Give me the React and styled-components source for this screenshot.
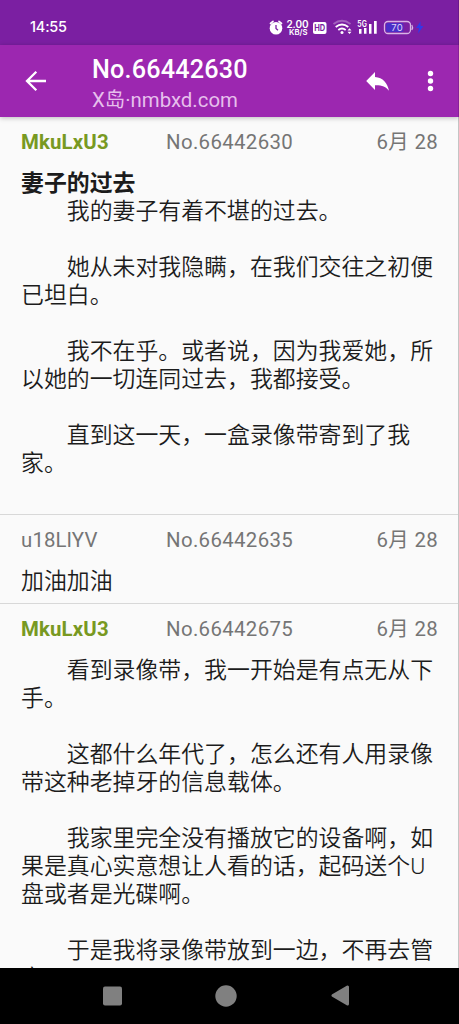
import React from 'react';
import styled, { createGlobalStyle } from 'styled-components';

const GlobalStyle = createGlobalStyle`
  * {
    box-sizing: border-box;
  }
  body {
    margin: 0;
    background: #000;
    font-family: Roboto, "Noto Sans CJK SC", sans-serif;
    text-spacing-trim: space-all;
  }
`;

const Screen = styled.div`
  width: 459px;
  height: 1024px;
  display: flex;
  flex-direction: column;
  overflow: hidden;
`;

const StatusBar = styled.div`
  flex: none;
  height: 45px;
  padding: 8px 30px 0 30px;
  display: flex;
  align-items: center;
  justify-content: space-between;
  color: #fff;
  background: #7b1fa2;
  border-right: 1px solid #6a1a8c;
`;

const Clock = styled.span`
  font-family: Inter, sans-serif;
  font-size: 14.5px;
  font-weight: 500;
  letter-spacing: -0.2px;
`;

const StatusIcons = styled.svg`
  display: block;
  width: 160px;
  height: 22px;
  font-family: Inter, sans-serif;
`;

const AppBar = styled.header`
  flex: none;
  height: 72px;
  padding: 0 20px 0 22px;
  display: flex;
  align-items: center;
  color: #fff;
  background: #9c27b0;
  border-right: 1px solid #87219a;
  position: relative;
  box-shadow: 0 1px 5px rgba(0, 0, 0, 0.25);
`;

const IconButton = styled.button`
  width: 28px;
  height: 28px;
  padding: 0;
  border: none;
  background: none;
  color: inherit;
  margin-left: ${(props) => props.$gap || 0}px;
  svg {
    display: block;
  }
`;

const TitleBlock = styled.div`
  flex: 1;
  margin-left: 42px;
  padding-top: 6px;
`;

const Title = styled.h1`
  margin: 0;
  font-size: 25.2px;
  line-height: 32px;
  font-weight: 500;
  letter-spacing: 0.2px;
`;

const Subtitle = styled.div`
  font-size: 20.4px;
  line-height: 29px;
  color: #e6bfec;
`;

const PostList = styled.main`
  flex: 1;
  min-height: 0;
  overflow: hidden;
  background: #fafafa;
  border-right: 1px solid #c4c4c4;
`;

const Post = styled.article`
  padding: 12px 20px 7.5px 21px;
  border-bottom: 1px solid #d8d8d8;
`;

const Meta = styled.div`
  height: 27px;
  display: grid;
  grid-template-columns: 145px 1fr auto;
  align-items: center;
  font-size: 20.4px;
  line-height: 27px;
  letter-spacing: 0.35px;
  color: #757575;
`;

const User = styled.span`
  letter-spacing: 0.15px;
  font-weight: ${(props) => (props.$op ? 700 : 400)};
  color: ${(props) => (props.$op ? '#789922' : 'inherit')};
`;

const Content = styled.div`
  margin-top: 13px;
  padding-top: 1px;
  font-size: 22.9px;
  line-height: 28px;
  font-weight: 350;
  color: #1c1c1c;
  white-space: pre-wrap;
`;

const Subject = styled.div`
  font-weight: 700;
`;

const NavBar = styled.nav`
  flex: none;
  height: 56px;
  padding-left: 102px;
  display: flex;
  align-items: center;
  gap: 92px;
  background: #000;
`;

const posts = [
  {
    id: '66442630',
    user: 'MkuLxU3',
    op: true,
    subject: '妻子的过去',
    text: `  我的妻子有着不堪的过去。

  她从未对我隐瞒,在我们交往之初便已坦白。

  我不在乎。或者说,因为我爱她,所以她的一切连同过去,我都接受。

  直到这一天,一盒录像带寄到了我家。
\u200b`,
  },
  { id: '66442635', user: 'u18LlYV', text: '加油加油' },
  {
    id: '66442675',
    user: 'MkuLxU3',
    op: true,
    text: `  看到录像带,我一开始是有点无从下手。

  这都什么年代了,怎么还有人用录像带这种老掉牙的信息载体。

  我家里完全没有播放它的设备啊,如果是真心实意想让人看的话,起码送个U盘或者是光碟啊。

  于是我将录像带放到一边,不再去管它。`,
  },
];

// paragraphs are indented by two full-width spaces
const format = (text) => text.replace(/^ {2}/gm, '\u3000\u3000').replace(/,/g, '\uff0c');

function Status() {
  return (
    <StatusBar>
      <Clock>14:55</Clock>
      <StatusIcons viewBox="268 15 160 22" fill="#fff">
        <circle cx="276" cy="27.3" r="6.3" />
        <path d="M270.500 22.500l2.500-2.100M281.500 22.500l-2.500-2.100" stroke="#fff" strokeWidth="1.700" strokeLinecap="round" />
        <path d="M276 24v3.500l2 1.700" fill="none" stroke="#7b1fa2" strokeWidth="1.3" />
        <text x="286.5" y="26.8" fontSize="10" fontWeight="600" textLength="22">2.00</text>
        <text x="289" y="34.3" fontSize="8" fontWeight="600" textLength="18.5" lengthAdjust="spacingAndGlyphs">KB/S</text>
        <rect x="313" y="21" width="13.5" height="12" rx="2" />
        <text x="314.2" y="30.3" fontSize="8.7" fontWeight="700" fill="#7b1fa2" textLength="11" lengthAdjust="spacingAndGlyphs">HD</text>
        <g fill="none" stroke="#fff" strokeWidth="1.8">
          <path d="M333.5 23q8.500-6.500 17 0" opacity="0.3" />
          <path d="M335.700 26q6.300-5 12.600 0" />
          <path d="M338.300 29q3.700-3 7.400 0" />
        </g>
        <circle cx="342" cy="31.500" r="1.500" />
        <path d="M347.500 29.500l2-2.300 2 2.300zM347.500 30.700l2 2.300 2-2.300z" />
        <text x="357.300" y="25.600" fontSize="8.300" fontWeight="600" textLength="9.500" lengthAdjust="spacingAndGlyphs">5G</text>
        <path d="M359 28h2.500v4.700H359zM364 27h2.500v5.700H364zM369 23h2.500v9.700H369zM374 20h2.700v12.700H374z" />
        <rect x="384.500" y="20.500" width="26" height="12" rx="3.500" fill="none" stroke="#d8b4e6" strokeWidth="1.300" />
        <rect x="386" y="22" width="17.500" height="9" rx="2" fill="#4a2fc8" />
        <path d="M411.800 24q1.600 2.500 0 5" fill="none" stroke="#d8b4e6" strokeWidth="1.200" />
        <text x="391.300" y="30" fontSize="9.500" fill="#e4d4f5" textLength="11.500">70</text>
        <path d="M420.500 20.500L416 27h3l-1 5.500 5.500-7.500h-3z" fill="#3338e8" />
      </StatusIcons>
    </StatusBar>
  );
}

function Toolbar() {
  return (
    <AppBar>
      <IconButton aria-label="back">
        <svg width="28" height="28" viewBox="0 0 28 28" fill="none" stroke="#fff" strokeWidth="2.3">
          <path d="M24 14H6M14.300 4.700L5 14l9.300 9.300" />
        </svg>
      </IconButton>
      <TitleBlock>
        <Title>No.66442630</Title>
        <Subtitle>X岛·nmbxd.com</Subtitle>
      </TitleBlock>
      <IconButton aria-label="reply">
        <svg width="28" height="28" viewBox="0 0 28 28" fill="#fff">
          <path d="M12 5v5c8 .5 12.500 6 14 13.800-3-4.300-7.500-5.800-14-5.600V23l-8.800-9z" />
        </svg>
      </IconButton>
      <IconButton aria-label="more" $gap={19}>
        <svg width="28" height="28" viewBox="0 0 28 28" fill="#fff">
          <circle cx="20.500" cy="6.500" r="2.700" />
          <circle cx="20.500" cy="14" r="2.700" />
          <circle cx="20.500" cy="21.500" r="2.700" />
        </svg>
      </IconButton>
    </AppBar>
  );
}

function App() {
  return (
    <>
      <GlobalStyle />
      <Screen>
        <Status />
        <Toolbar />
        <PostList>
          {posts.map((post) => (
            <Post key={post.id}>
              <Meta>
                <User $op={post.op}>{post.user}</User>
                <span>No.{post.id}</span>
                <span>6月 28</span>
              </Meta>
              <Content lang="zh-CN">
                {post.subject && <Subject>{post.subject}</Subject>}
                {format(post.text)}
              </Content>
            </Post>
          ))}
        </PostList>
        <NavBar>
          <svg width="22" height="22" fill="#808080">
            <rect x="1" y="1.500" width="19" height="19" rx="2" />
          </svg>
          <svg width="22" height="22" fill="#808080" overflow="visible">
            <circle cx="10" cy="11" r="10.700" />
          </svg>
          <svg width="22" height="22" fill="#808080" stroke="#808080" strokeWidth="3" strokeLinejoin="round">
            <path d="M17.500 2v17L3 10.500z" />
          </svg>
        </NavBar>
      </Screen>
    </>
  );
}

export default App;
